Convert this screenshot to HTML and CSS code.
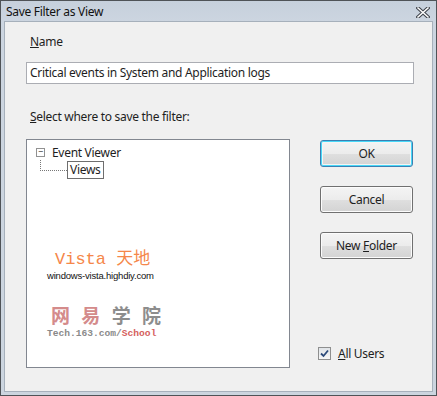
FILE: index.html
```html
<!DOCTYPE html>
<html>
<head>
    <title>Save Filter as View</title>
    <link rel="stylesheet" href="styles.css">
</head>
<body>
    <div class="window">
        <div class="titlebar">
            <span class="title">Save Filter as View</span>
            <svg class="close" width="14" height="11" viewBox="0 0 14 11">
                <path d="M2 1 L12 10 M12 1 L2 10" stroke="#3f444c" stroke-width="3.6" stroke-linecap="square"/>
                <path d="M2 1 L12 10 M12 1 L2 10" stroke="#ffffff" stroke-width="1.5" stroke-linecap="square"/>
            </svg>
        </div>
        <div class="client">
            <label class="label label-name"><u>N</u>ame</label>
            <div class="textbox">Critical events in System and Application logs</div>
            <label class="label label-select"><u>S</u>elect where to save the filter:</label>

            <div class="main">
                <div class="tree">
                    <div class="node">
                        <span class="expander">&minus;</span>
                        <span class="node-text">Event Viewer</span>
                    </div>
                    <div class="node child">
                        <span class="connector"></span>
                        <span class="node-text selected">Views</span>
                    </div>

                    <div class="watermark">
                        <div class="wm-vista">Vista <span class="cjk">天地</span></div>
                        <div class="wm-url">windows-vista.highdiy.com</div>
                        <div class="wm-163"><span class="red">网 易</span> 学 院</div>
                        <div class="wm-tech">Tech.163.com/<span class="red">School</span></div>
                    </div>
                </div>

                <div class="side">
                    <button class="btn btn-default">OK</button>
                    <button class="btn">Cancel</button>
                    <button class="btn">New <u>F</u>older</button>
                    <label class="check">
                        <span class="box">
                            <svg width="9" height="9" viewBox="0 0 9 9">
                                <path d="M1 4.5 L3.5 7 L8 1.5" fill="none" stroke="#2b4a7a" stroke-width="1.8"/>
                            </svg>
                        </span>
                        <span><u>A</u>ll Users</span>
                    </label>
                </div>
            </div>
        </div>
    </div>
</body>
</html>
```

FILE: styles.css
```css
body {
    margin: 0;
    background: #ffffff;
    font-family: 'Noto Sans', 'Open Sans', sans-serif;
    font-size: 12px;
    letter-spacing: -0.3px;
    color: #1e1e1e;
}

.window {
    width: 437px;
    height: 396px;
    box-sizing: border-box;
    border: 1px solid #4f5357;
    background: linear-gradient(#c6d0dc, #ccd5e0 20px, #ccd5df);
    padding: 0 3px 3px 3px;
    display: flex;
    flex-direction: column;
}

.titlebar {
    height: 20px;
    display: flex;
    align-items: center;
    justify-content: space-between;
    padding: 0 3px 0 2px;
    flex-shrink: 0;
}

.title {
    font-size: 12px;
    color: #111;
}

.close {
    margin-top: 2px;
}

.client {
    flex: 1;
    background: #f0f0f0;
    border: 1px solid #a6b0bb;
    padding: 0 18px 0 21px;
    display: flex;
    flex-direction: column;
}

.label {
    display: block;
    padding-left: 4px;
    line-height: 16px;
}

.label-name {
    margin-top: 12px;
}

.textbox {
    margin-top: 12px;
    height: 20px;
    border: 1px solid #abadb3;
    background: #fff;
    padding-left: 3px;
    line-height: 20px;
    white-space: nowrap;
}

.label-select {
    margin-top: 25px;
}

.main {
    margin-top: 14px;
    display: flex;
}

.tree {
    border: 1px solid #828790;
    background: #fff;
    padding: 4px 0 0 8px;
    box-sizing: border-box;
    width: 264px;
    height: 229px;
}

.node {
    display: flex;
    align-items: center;
    height: 17px;
}

.expander {
    width: 7px;
    height: 7px;
    border: 1px solid #919191;
    font-size: 9px;
    line-height: 6px;
    text-align: center;
    color: #333;
    margin-right: 5px;
    margin-left: 1px;
}

.node-text {
    line-height: 15px;
    padding: 0 2px;
}

.child {
    padding-left: 5px;
    height: 18px;
}

.connector {
    width: 26px;
    height: 10px;
    border-left: 1px dotted #777;
    border-bottom: 1px dotted #777;
    margin-top: -10px;
}

.selected {
    border: 1px solid #6e6e6e;
    padding: 0 2px;
    line-height: 16px;
}

.watermark {
    margin: 68px 0 0 12px;
    letter-spacing: 0;
}

.wm-vista {
    font-family: 'Liberation Mono', monospace;
    font-size: 17px;
    color: #f5874a;
    height: 20px;
    line-height: 20px;
    margin-left: 8px;
}

.wm-vista .cjk {
    font-family: 'Noto Sans CJK SC', sans-serif;
    font-size: 17px;
}

.wm-url {
    font-family: 'Liberation Sans', sans-serif;
    font-size: 9.5px;
    color: #111;
    margin-top: 3px;
    letter-spacing: -0.2px;
}

.wm-163 {
    font-family: 'Noto Sans CJK SC', sans-serif;
    font-weight: bold;
    font-size: 19px;
    color: #8d8d8d;
    margin: 22px 0 0 4px;
    line-height: 24px;
    letter-spacing: 3.5px;
}

.wm-163 .red {
    color: #d48b8b;
}

.wm-tech {
    font-family: 'Liberation Mono', monospace;
    font-weight: bold;
    font-size: 9.6px;
    color: #8a8a8a;
    margin-top: 1px;
}

.wm-tech .red {
    color: #d5605c;
}

.side {
    margin-left: 30px;
    padding-top: 1px;
    display: flex;
    flex-direction: column;
    flex: 1;
}

.btn {
    width: 93px;
    height: 27px;
    margin-bottom: 19px;
    border: 1px solid #707070;
    border-radius: 3px;
    background: linear-gradient(#f4f4f4, #ececec 50%, #dfdfdf 51%, #d3d3d3);
    font-family: inherit;
    font-size: 12px;
    letter-spacing: -0.3px;
    color: #1e1e1e;
    box-shadow: inset 0 0 0 1px #fcfcfc;
    padding: 0;
}

.btn-default {
    border-color: #3c7fb1;
    box-shadow: inset 0 0 0 1px #48d8f8, inset 0 0 0 2px #f4f4f4;
}

.check {
    margin-top: auto;
    margin-bottom: 6px;
    display: flex;
    align-items: center;
    margin-left: -2px;
}

.box {
    width: 11px;
    height: 11px;
    border: 1px solid #8e8f8f;
    background: linear-gradient(#e0e4e8, #f6f6f6);
    display: flex;
    align-items: center;
    justify-content: center;
    margin-right: 7px;
}
```
